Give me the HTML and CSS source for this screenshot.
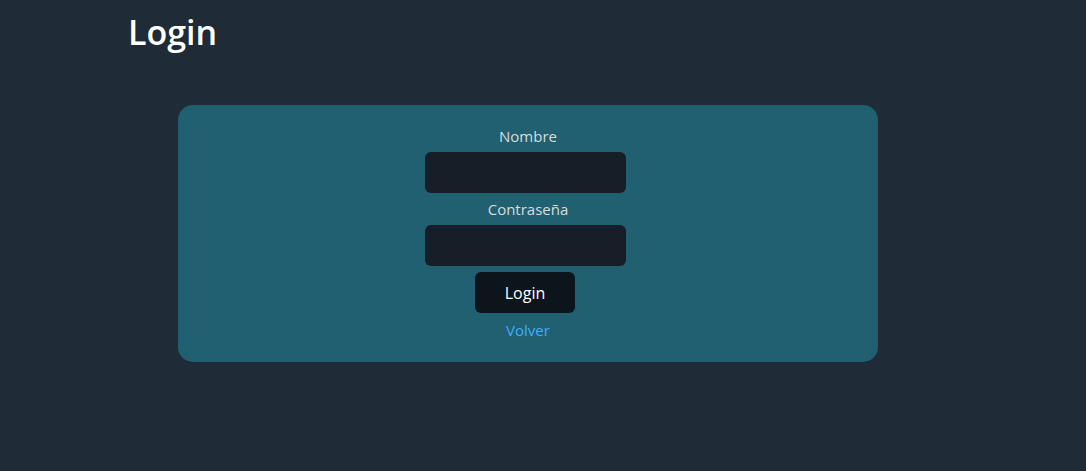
FILE: index.html
```html
<!DOCTYPE html>
<html lang="es">
<head>
<meta charset="utf-8">
<meta name="viewport" content="width=device-width, initial-scale=1">
<title>Login</title>
<link rel="stylesheet" href="styles.css">
</head>
<body>
<main class="page">
  <h1 class="title">Login</h1>
  <form class="card">
    <label class="label" for="nombre">Nombre</label>
    <input class="field" type="text" id="nombre" name="nombre">
    <label class="label" for="clave">Contraseña</label>
    <input class="field" type="password" id="clave" name="clave">
    <button class="submit" type="submit">Login</button>
    <a class="back" href="#">Volver</a>
  </form>
</main>
</body>
</html>
```

FILE: styles.css
```css
body {
  margin: 0;
  background: #202b38;
  color: #dbdbdb;
  font: 15px/22px "Segoe UI", "Open Sans", "Noto Sans", sans-serif;
}

.page {
  max-width: 830px;
  margin: 0 auto;
  padding: 8px 30px 0 0;
  box-sizing: border-box;
}

.title {
  margin: 0 0 48px;
  color: #fff;
  font-size: 34px;
  line-height: 49px;
  font-weight: 600;
}

.card {
  display: flex;
  flex-direction: column;
  align-items: center;
  max-width: 700px;
  margin: 0 auto;
  padding: 20px 20px 21px;
  box-sizing: border-box;
  border-radius: 15px;
  background: #206070;
}

.label {
  margin-bottom: 5px;
}

.field {
  width: 201px;
  height: 41px;
  margin: 0 6px 5px 0;
  padding: 10px;
  box-sizing: border-box;
  border: 0;
  border-radius: 6px;
  background: #161f27;
  color: #fff;
  font: inherit;
}

.submit {
  height: 41px;
  margin: 1px 6px 6px 0;
  padding: 0 30px;
  border: 0;
  border-radius: 6px;
  background: #0c151c;
  color: #fff;
  font: inherit;
  font-size: 16px;
}

.back {
  color: #41adff;
  text-decoration: none;
}
```
